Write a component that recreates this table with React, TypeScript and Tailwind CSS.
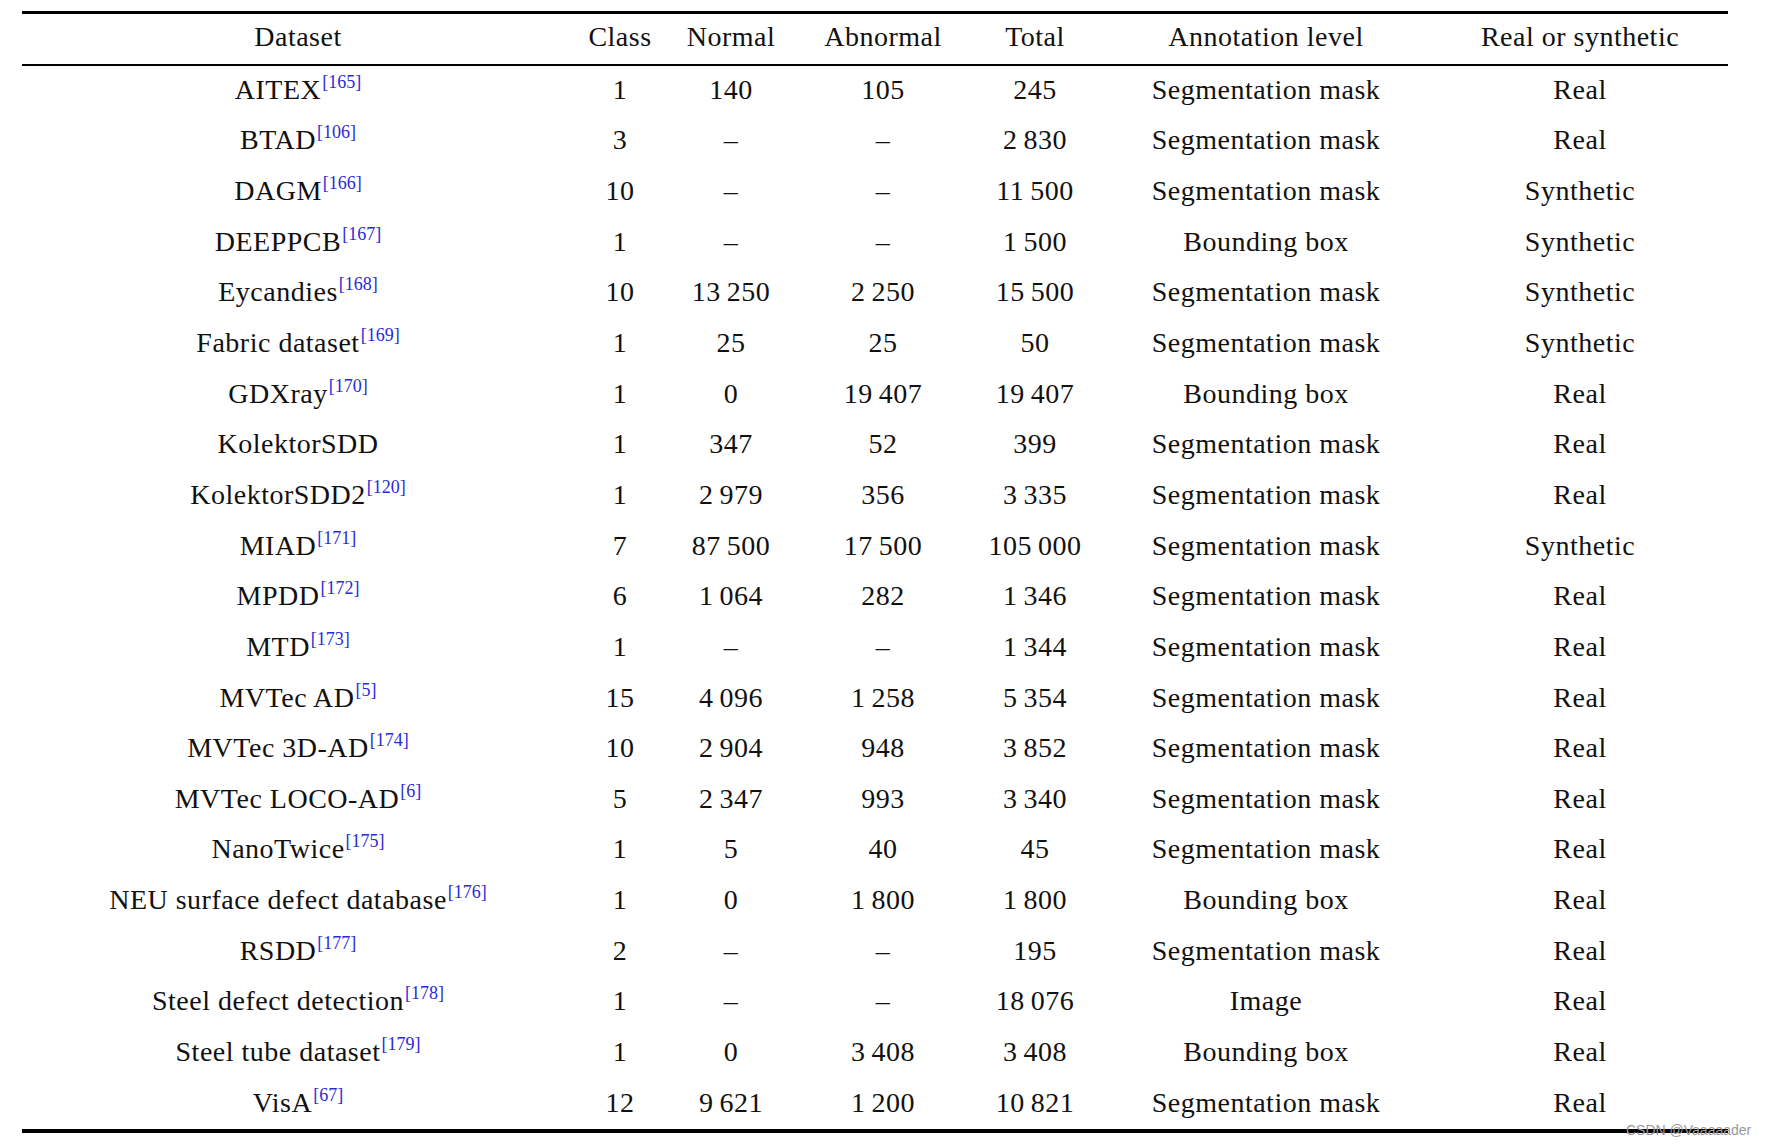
import React from 'react';

type Row = {
  name: string;
  ref?: string;
  cls: string;
  normal: string;
  abnormal: string;
  total: string;
  level: string;
  kind: string;
};

const T = '\u2009';
const D = '–';

const ROWS: Row[] = [
  { name: 'AITEX', ref: '165', cls: '1', normal: '140', abnormal: '105', total: '245', level: 'Segmentation mask', kind: 'Real' },
  { name: 'BTAD', ref: '106', cls: '3', normal: D, abnormal: D, total: `2${T}830`, level: 'Segmentation mask', kind: 'Real' },
  { name: 'DAGM', ref: '166', cls: '10', normal: D, abnormal: D, total: `11${T}500`, level: 'Segmentation mask', kind: 'Synthetic' },
  { name: 'DEEPPCB', ref: '167', cls: '1', normal: D, abnormal: D, total: `1${T}500`, level: 'Bounding box', kind: 'Synthetic' },
  { name: 'Eycandies', ref: '168', cls: '10', normal: `13${T}250`, abnormal: `2${T}250`, total: `15${T}500`, level: 'Segmentation mask', kind: 'Synthetic' },
  { name: 'Fabric dataset', ref: '169', cls: '1', normal: '25', abnormal: '25', total: '50', level: 'Segmentation mask', kind: 'Synthetic' },
  { name: 'GDXray', ref: '170', cls: '1', normal: '0', abnormal: `19${T}407`, total: `19${T}407`, level: 'Bounding box', kind: 'Real' },
  { name: 'KolektorSDD', cls: '1', normal: '347', abnormal: '52', total: '399', level: 'Segmentation mask', kind: 'Real' },
  { name: 'KolektorSDD2', ref: '120', cls: '1', normal: `2${T}979`, abnormal: '356', total: `3${T}335`, level: 'Segmentation mask', kind: 'Real' },
  { name: 'MIAD', ref: '171', cls: '7', normal: `87${T}500`, abnormal: `17${T}500`, total: `105${T}000`, level: 'Segmentation mask', kind: 'Synthetic' },
  { name: 'MPDD', ref: '172', cls: '6', normal: `1${T}064`, abnormal: '282', total: `1${T}346`, level: 'Segmentation mask', kind: 'Real' },
  { name: 'MTD', ref: '173', cls: '1', normal: D, abnormal: D, total: `1${T}344`, level: 'Segmentation mask', kind: 'Real' },
  { name: 'MVTec AD', ref: '5', cls: '15', normal: `4${T}096`, abnormal: `1${T}258`, total: `5${T}354`, level: 'Segmentation mask', kind: 'Real' },
  { name: 'MVTec 3D-AD', ref: '174', cls: '10', normal: `2${T}904`, abnormal: '948', total: `3${T}852`, level: 'Segmentation mask', kind: 'Real' },
  { name: 'MVTec LOCO-AD', ref: '6', cls: '5', normal: `2${T}347`, abnormal: '993', total: `3${T}340`, level: 'Segmentation mask', kind: 'Real' },
  { name: 'NanoTwice', ref: '175', cls: '1', normal: '5', abnormal: '40', total: '45', level: 'Segmentation mask', kind: 'Real' },
  { name: 'NEU surface defect database', ref: '176', cls: '1', normal: '0', abnormal: `1${T}800`, total: `1${T}800`, level: 'Bounding box', kind: 'Real' },
  { name: 'RSDD', ref: '177', cls: '2', normal: D, abnormal: D, total: '195', level: 'Segmentation mask', kind: 'Real' },
  { name: 'Steel defect detection', ref: '178', cls: '1', normal: D, abnormal: D, total: `18${T}076`, level: 'Image', kind: 'Real' },
  { name: 'Steel tube dataset', ref: '179', cls: '1', normal: '0', abnormal: `3${T}408`, total: `3${T}408`, level: 'Bounding box', kind: 'Real' },
  { name: 'VisA', ref: '67', cls: '12', normal: `9${T}621`, abnormal: `1${T}200`, total: `10${T}821`, level: 'Segmentation mask', kind: 'Real' },
];

// column widths tuned so that each centre lands where the reference has it
const COLS = 'grid grid-cols-[552px_92px_130px_174px_130px_332px_296px]';

const Cell = ({ children }: { children: React.ReactNode }) => (
  <div className="flex items-center justify-center whitespace-nowrap pb-[3px]">{children}</div>
);

export default function App() {
  return (
    <div
      className="relative w-[1765px] h-[1146px] bg-white text-[#111] text-[28px] leading-none tracking-[0.5px]"
      style={{ fontFamily: '"Liberation Serif", "Times New Roman", serif' }}
    >
      <div className="pt-[11px] pl-[22px] w-[1728px]">
        <div className="h-[3px] bg-black" />

        {/* header */}
        <div className={`${COLS} h-[50px] pb-[2px]`}>
          <Cell>Dataset</Cell>
          <Cell>Class</Cell>
          <Cell>Normal</Cell>
          <Cell>Abnormal</Cell>
          <Cell>Total</Cell>
          <Cell>Annotation level</Cell>
          <Cell>Real or synthetic</Cell>
        </div>
        <div className="h-[2px] bg-black" />

        {/* body */}
        {ROWS.map((r) => (
          <div key={r.name} className={`${COLS} h-[50.65px]`}>
            <Cell>
              <span>
                {r.name}
                {r.ref && (
                  <span className="relative -top-[11px] ml-[1px] text-[18px] tracking-normal text-[#2a2ad8]">
                    [{r.ref}]
                  </span>
                )}
              </span>
            </Cell>
            <Cell>{r.cls}</Cell>
            <Cell>{r.normal}</Cell>
            <Cell>{r.abnormal}</Cell>
            <Cell>{r.total}</Cell>
            <Cell>{r.level}</Cell>
            <Cell>{r.kind}</Cell>
          </div>
        ))}
        <div className="h-[3.5px] bg-black" />
      </div>

      {/* watermark */}
      <div
        className="absolute left-[1626px] top-[1123px] text-[14px] leading-none tracking-normal text-[#999]"
        style={{ fontFamily: '"Liberation Sans", Arial, sans-serif' }}
      >
        CSDN @Vaaaaader
      </div>
    </div>
  );
}
